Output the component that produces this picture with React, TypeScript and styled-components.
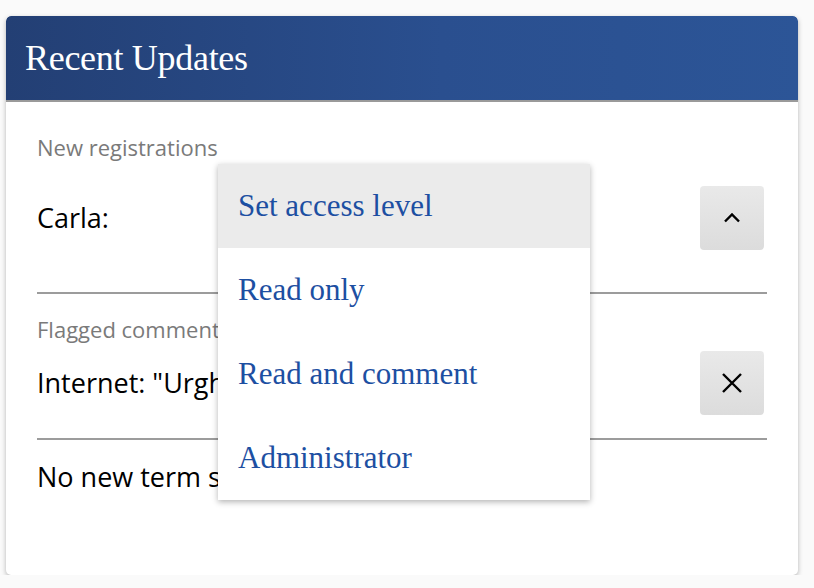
import React from "react";
import styled, { createGlobalStyle } from "styled-components";

const Global = createGlobalStyle`
  html, body { margin: 0; padding: 0; background: #fafafa; }
  body { font-family: "Open Sans", "Noto Sans", sans-serif; }
`;

const Page = styled.div`
  padding: 16px 16px 0 6px;
`;

const Card = styled.div`
  position: relative;
  width: 792px;
  height: 559px;
  background: #fff;
  border-radius: 5px;
  box-shadow: 0 2px 5px rgba(0, 0, 0, 0.28);
  overflow: hidden;
`;

const Header = styled.div`
  height: 84px;
  display: flex;
  align-items: center;
  padding-left: 19px;
  background: linear-gradient(90deg, #233f74 0%, #2a4f8f 55%, #2c5597 100%);
  border-radius: 5px 5px 0 0;
  border-bottom: 2px solid #9a9a9a;
`;

const Title = styled.h1`
  margin: 0;
  font-family: "Liberation Serif", "DejaVu Serif", serif;
  font-weight: 400;
  font-size: 36px;
  line-height: 40px;
  color: #fff;
  letter-spacing: -0.3px;
`;

const Body = styled.div`
  padding: 0 31px;
`;

const Section = styled.div<{ $top: number; $gap: number; $bottom: number }>`
  padding-top: ${(p) => p.$top}px;
  padding-bottom: ${(p) => p.$bottom}px;
  display: flex;
  flex-direction: column;
  gap: ${(p) => p.$gap}px;
  border-bottom: 2px solid #9c9c9c;
`;

const Label = styled.div`
  font-size: 22px;
  line-height: 28px;
  color: #7a7a7a;
  white-space: nowrap;
`;

const Row = styled.div`
  display: flex;
  align-items: center;
  justify-content: space-between;
  padding-right: 3px;
`;

const Text = styled.div`
  font-size: 27px;
  line-height: 32px;
  color: #000;
  white-space: nowrap;
`;

const IconButton = styled.button`
  width: 64px;
  height: 64px;
  border: none;
  border-radius: 4px;
  background: linear-gradient(180deg, #e9e9e9 0%, #dcdcdc 100%);
  display: flex;
  align-items: center;
  justify-content: center;
  padding: 0;
  flex-shrink: 0;
`;

const Footer = styled.div`
  padding-top: 21px;
`;

const Menu = styled.ul`
  position: absolute;
  left: 212px;
  top: 148px;
  width: 372px;
  margin: 0;
  padding: 0;
  list-style: none;
  background: #fff;
  box-shadow: 0 2px 6px rgba(0, 0, 0, 0.3);
`;

const MenuItem = styled.li<{ $active?: boolean }>`
  height: 84px;
  display: flex;
  align-items: center;
  padding-left: 20px;
  background: ${(p) => (p.$active ? "#ebebeb" : "#fff")};
  font-family: "Liberation Serif", "DejaVu Serif", serif;
  font-size: 31px;
  color: #1d4fa2;
`;

export default function App() {
  return (
    <Page>
      <Global />
      <Card>
        <Header>
          <Title>Recent Updates</Title>
        </Header>
        <Body>
          <Section $top={31} $gap={25} $bottom={42}>
            <Label>New registrations</Label>
            <Row>
              <Text>Carla:</Text>
              <IconButton aria-label="collapse">
                <svg width="20" height="20" viewBox="0 0 20 20">
                  <path d="M3 13.5 L10 6.5 L17 13.5" fill="none" stroke="#000" strokeWidth="2.4" />
                </svg>
              </IconButton>
            </Row>
          </Section>
          <Section $top={21} $gap={8} $bottom={23}>
            <Label>Flagged comments</Label>
            <Row>
              <Text>Internet: "Urgh, this is terrible"</Text>
              <IconButton aria-label="dismiss">
                <svg width="24" height="24" viewBox="0 0 24 24">
                  <path d="M3 3 L21 21 M21 3 L3 21" fill="none" stroke="#000" strokeWidth="2.4" />
                </svg>
              </IconButton>
            </Row>
          </Section>
          <Footer>
            <Text>No new term suggestions</Text>
          </Footer>
        </Body>
        <Menu>
          <MenuItem $active>Set access level</MenuItem>
          <MenuItem>Read only</MenuItem>
          <MenuItem>Read and comment</MenuItem>
          <MenuItem>Administrator</MenuItem>
        </Menu>
      </Card>
    </Page>
  );
}
